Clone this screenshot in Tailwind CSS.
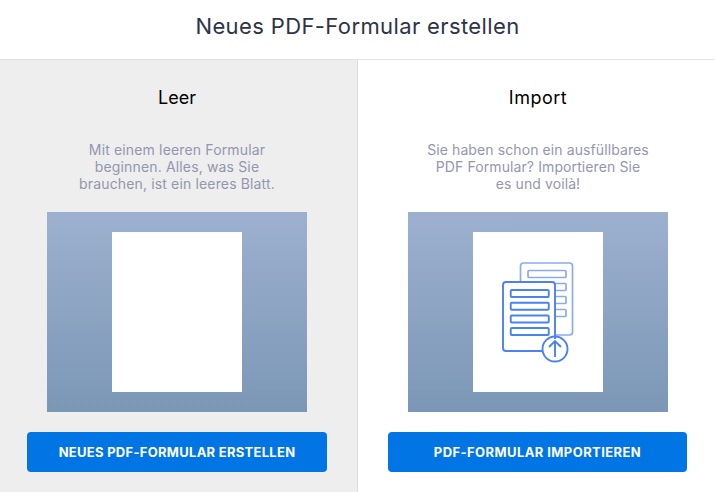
<!DOCTYPE html>
<html lang="de">
<head>
<meta charset="utf-8">
<script src="https://cdn.jsdelivr.net/npm/@tailwindcss/browser@4"></script>
</head>
<body class="bg-white font-['Inter',sans-serif] overflow-hidden">
<div class="w-[715px] h-[492px] flex flex-col overflow-hidden">
  <header class="h-[60px] shrink-0 border-b border-[#e3e3e3] flex items-center justify-center pb-[6px] text-[22px] text-[#2d3348] tracking-[0.38px]">Neues PDF-Formular erstellen</header>
  <main class="flex flex-1">
    <section class="w-[358px] shrink-0 bg-[#eeeeee] border-r border-[#dedede] pl-[27px]">
      <div class="w-[300px] flex flex-col items-center">
        <h2 class="mt-[26px] h-[24px] leading-[24px] text-[18px] text-black">Leer</h2>
        <p class="mt-[31px] h-[53px] w-[240px] text-center text-[14px] leading-[17px] tracking-[0.15px] text-[#9396b0]">Mit einem leeren Formular<br>beginnen. Alles, was Sie<br>brauchen, ist ein leeres Blatt.</p>
        <div class="mt-[18px] w-[260px] h-[200px] bg-gradient-to-b from-[#9db0cf] to-[#7c97b6] flex items-center justify-center">
          <div class="w-[130px] h-[160px] bg-white"></div>
        </div>
        <button class="mt-[20px] w-[300px] h-[40px] pt-[1px] rounded-[4px] bg-[#0075e3] text-white text-[13px] font-bold tracking-[0.28px]">NEUES PDF-FORMULAR ERSTELLEN</button>
      </div>
    </section>
    <section class="flex-1 pl-[30px]">
      <div class="w-[300px] flex flex-col items-center">
        <h2 class="mt-[26px] h-[24px] leading-[24px] text-[18px] text-black tracking-[0.5px]">Import</h2>
        <p class="mt-[31px] h-[53px] w-[240px] text-center text-[14px] leading-[17px] tracking-[0.1px] text-[#9396b0]">Sie haben schon ein ausfüllbares<br>PDF Formular? Importieren Sie<br>es und voilà!</p>
        <div class="mt-[18px] w-[260px] h-[200px] bg-gradient-to-b from-[#9db0cf] to-[#7c97b6] flex items-center justify-center">
          <div class="w-[130px] h-[160px] bg-white flex items-center justify-center">
            <svg width="136" height="165" viewBox="0 0 136 165" fill="none" class="shrink-0">
              <g stroke="#8aabf1" stroke-width="1.7">
                <path d="M50.500 52V36a3 3 0 0 1 3-3h46a3 3 0 0 1 3 3v66a3 3 0 0 1-3 3H85.500"/>
                <rect x="58" y="40.500" width="38" height="7" rx="1"/>
                <path d="M85.500 53.500H95a1 1 0 0 1 1 1v5a1 1 0 0 1-1 1h-9.500M85.500 66.500H95a1 1 0 0 1 1 1v5a1 1 0 0 1-1 1h-9.500M85.500 79.500H95a1 1 0 0 1 1 1v5a1 1 0 0 1-1 1h-9.500"/>
              </g>
              <g stroke="#4a82ee" stroke-width="1.9">
                <path d="M72 121H36a3 3 0 0 1-3-3V55a3 3 0 0 1 3-3h46a3 3 0 0 1 3 3v54"/>
                <rect x="40.750" y="60" width="38" height="7" rx="1"/>
                <rect x="40.750" y="72.750" width="38" height="7" rx="1"/>
                <rect x="40.750" y="85.500" width="38" height="7" rx="1"/>
                <rect x="40.750" y="98" width="38" height="7" rx="1"/>
                <circle cx="85" cy="119" r="12.500"/>
                <path d="M85 127V111.500M79 117l6-6 6 6"/>
              </g>
            </svg>
          </div>
        </div>
        <button class="mt-[20px] self-start w-[299px] h-[40px] pt-[1px] rounded-[4px] bg-[#0075e3] text-white text-[13px] font-bold tracking-[0.42px]">PDF-FORMULAR IMPORTIEREN</button>
      </div>
    </section>
  </main>
</div>
</body>
</html>
